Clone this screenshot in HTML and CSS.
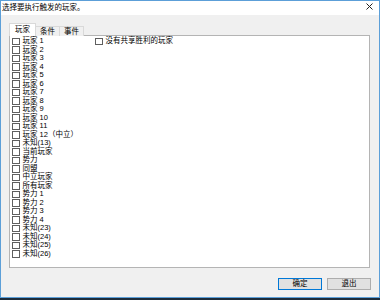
FILE: index.html
```html
<!DOCTYPE html>
<html lang="zh-CN">
<head>
<meta charset="utf-8">
<link rel="stylesheet" href="styles.css">
</head>
<body>
<div class="window">
  <div class="titlebar">
    <span class="title">选择要执行触发的玩家。</span>
    <span class="close">
      <svg width="7" height="7" viewBox="0 0 7 7"><path d="M0.5 0.5 L6.5 6.5 M6.5 0.5 L0.5 6.5" stroke="#222" stroke-width="1" fill="none"/></svg>
    </span>
  </div>
  <div class="content">
    <div class="tabs">
      <div class="tab active">玩家</div>
      <div class="tab">条件</div>
      <div class="tab">事件</div>
    </div>
    <div class="panel">
      <div class="col left">
        <label class="row"><span class="box"></span>玩家 1</label>
        <label class="row"><span class="box"></span>玩家 2</label>
        <label class="row"><span class="box"></span>玩家 3</label>
        <label class="row"><span class="box"></span>玩家 4</label>
        <label class="row"><span class="box"></span>玩家 5</label>
        <label class="row"><span class="box"></span>玩家 6</label>
        <label class="row"><span class="box"></span>玩家 7</label>
        <label class="row"><span class="box"></span>玩家 8</label>
        <label class="row"><span class="box"></span>玩家 9</label>
        <label class="row"><span class="box"></span>玩家 10</label>
        <label class="row"><span class="box"></span>玩家 11</label>
        <label class="row"><span class="box"></span>玩家 12（中立）</label>
        <label class="row"><span class="box"></span>未知(13)</label>
        <label class="row"><span class="box"></span>当前玩家</label>
        <label class="row"><span class="box"></span>势力</label>
        <label class="row"><span class="box"></span>同盟</label>
        <label class="row"><span class="box"></span>中立玩家</label>
        <label class="row"><span class="box"></span>所有玩家</label>
        <label class="row"><span class="box"></span>势力 1</label>
        <label class="row"><span class="box"></span>势力 2</label>
        <label class="row"><span class="box"></span>势力 3</label>
        <label class="row"><span class="box"></span>势力 4</label>
        <label class="row"><span class="box"></span>未知(23)</label>
        <label class="row"><span class="box"></span>未知(24)</label>
        <label class="row"><span class="box"></span>未知(25)</label>
        <label class="row"><span class="box"></span>未知(26)</label>
      </div>
      <div class="col right">
        <label class="row"><span class="box"></span>没有共享胜利的玩家</label>
      </div>
    </div>
    <div class="buttons">
      <button class="btn default">确定</button>
      <button class="btn">退出</button>
    </div>
  </div>
</div>
<div class="taskbar"></div>
</body>
</html>
```

FILE: styles.css
```css
* { box-sizing: border-box; }
html, body {
  margin: 0;
  padding: 0;
  width: 380px;
  height: 300px;
  overflow: hidden;
  background: #f0f0f0;
  font-family: "Liberation Sans", "Noto Sans CJK SC", sans-serif;
  font-size: 7.5px;
  color: #000;
}
.window {
  width: 380px;
  height: 298px;
  border: 1px solid #5c9fd8;
  background: #f0f0f0;
  display: flex;
  flex-direction: column;
}
.taskbar {
  height: 2px;
  background: #1c2b3a;
}
.titlebar {
  height: 14px;
  background: #fff;
  display: flex;
  align-items: center;
  justify-content: space-between;
  padding: 0 6px 0 1px;
}
.title {
  font-size: 7.5px;
  line-height: 12px;
}
.close {
  display: flex;
  width: 7px;
  height: 7px;
  margin-top: -3px;
}
.content {
  flex: 1;
  display: flex;
  flex-direction: column;
  padding: 8px 9px 0 8px;
}
.tabs {
  display: flex;
  align-items: flex-end;
  height: 13px;
  padding-left: 0;
  position: relative;
  z-index: 1;
  margin-bottom: -1px;
}
.tab {
  height: 10px;
  line-height: 9px;
  padding: 0 4px;
  width: 25px;
  text-align: center;
  border: 1px solid #d9d9d9;
  border-bottom: none;
  background: #f0f0f0;
  margin-left: -1px;
}
.tab.active {
  height: 13px;
  line-height: 11px;
  width: 27px;
  margin-left: 0;
  background: #fff;
  border-color: #d9d9d9;
}
.panel {
  height: 233px;
  background: #fff;
  border: 1px solid #b4b4b4;
  display: grid;
  grid-template-columns: 83px 1fr;
  padding: 1px 0 0 2px;
}
.col {
  display: flex;
  flex-direction: column;
}
.row {
  display: flex;
  align-items: center;
  height: 8.5px;
  line-height: 8.5px;
  white-space: nowrap;
}
.box {
  width: 7.5px;
  height: 7.5px;
  border: 1px solid #5f5f5f;
  background: #fff;
  margin-right: 3px;
  flex: none;
}
.buttons {
  display: flex;
  justify-content: flex-end;
  gap: 5px;
  margin-top: 10px;
  padding-right: 0;
  margin-right: -1px;
}
.btn {
  width: 44px;
  height: 12px;
  padding: 0;
  font: inherit;
  font-size: 7.5px;
  line-height: 10px;
  background: #e1e1e1;
  border: 1px solid #adadad;
  color: #000;
}
.btn.default {
  border-color: #0078d7;
}
```
